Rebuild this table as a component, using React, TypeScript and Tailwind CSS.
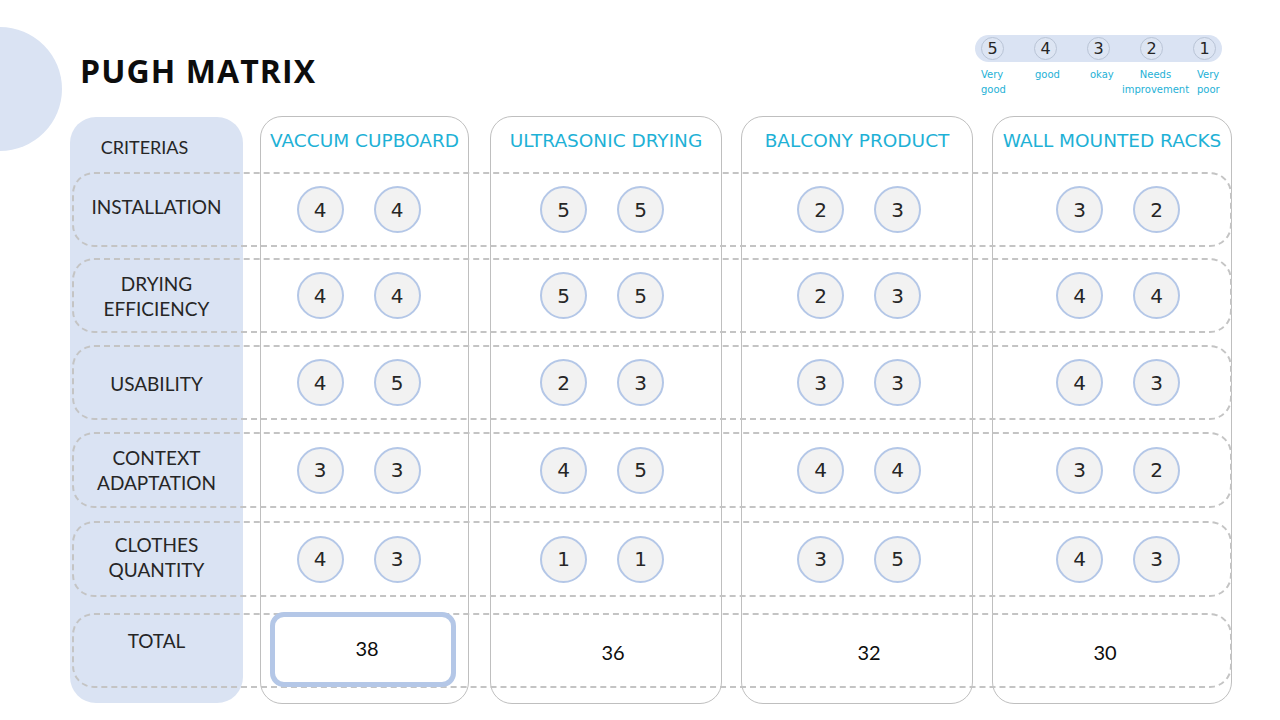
import React from "react";

const cols = [
  { name: "VACCUM CUPBOARD", scores: [[4, 4], [4, 4], [4, 5], [3, 3], [4, 3]], total: 38 },
  { name: "ULTRASONIC DRYING", scores: [[5, 5], [5, 5], [2, 3], [4, 5], [1, 1]], total: 36 },
  { name: "BALCONY PRODUCT", scores: [[2, 3], [2, 3], [3, 3], [4, 4], [3, 5]], total: 32 },
  { name: "WALL MOUNTED RACKS", scores: [[3, 2], [4, 4], [4, 3], [3, 2], [4, 3]], total: 30 },
];

const colCls = ["ml-[17px] w-[209px]", "ml-[21px] w-[232px]", "ml-[19px] w-[232px]", "ml-[19px] w-[240px]"];
const innerColCls = ["ml-[17px] w-[209px]", "ml-[21px] w-[232px]", "ml-[19px] w-[232px]", "ml-[19px] w-[238px]"];
const scoreShift = ["pr-[12px]", "pr-[8px]", "pl-[4px]", "pl-[14px]"];
const totalShift = ["pl-[8px]", "pl-[14px]", "pl-[24px]", "pr-[12px]"];

const criteria = [
  ["INSTALLATION"],
  ["DRYING", "EFFICIENCY"],
  ["USABILITY"],
  ["CONTEXT", "ADAPTATION"],
  ["CLOTHES", "QUANTITY"],
];
const rowMt = ["mt-0", "mt-[11px]", "mt-[12px]", "mt-[12px]", "mt-[13px]"];
const rowH = ["h-[75px]", "h-[75px]", "h-[75px]", "h-[76px]", "h-[76px]"];
const labelPad = ["pb-[6px]", "pt-0", "pt-[2px]", "pb-0", "pb-[4px]"];

const sans = { fontFamily: "'DejaVu Sans', Verdana, sans-serif" };
const labelFont = { fontFamily: "Lato, 'Open Sans', sans-serif" };

function Score({ v }: { v: number }) {
  return (
    <div
      className="w-[47px] h-[47px] rounded-full bg-[#f2f2f2] border-2 border-[#b4c7e7] flex items-center justify-center text-[20px] text-[#262626]"
      style={sans}
    >
      {v}
    </div>
  );
}

function Legend() {
  const items = [5, 4, 3, 2, 1];
  return (
    <div className="w-[247px]">
      <div className="h-[27px] rounded-full bg-[#dae3f3] flex items-center pl-[6px] gap-[30px]">
        {items.map((n) => (
          <div
            key={n}
            className="w-[23px] h-[23px] rounded-full border border-[#b9c4d6] bg-[#dde5f3] flex items-center justify-center text-[16px] text-[#262626]"
            style={sans}
          >
            {n}
          </div>
        ))}
      </div>
      <div className="flex items-start mt-[5px] text-[10px] leading-[15px] text-[#1eb1d6] whitespace-nowrap" style={sans}>
        <div className="ml-[6px] w-[28px] text-left">Very<br />good</div>
        <div className="ml-[26px] w-[27px] text-left">good</div>
        <div className="ml-[28px] w-[25px] text-left">okay</div>
        <div className="ml-[7px] w-[67px] text-center">Needs<br />improvement</div>
        <div className="ml-[8px] w-[25px] text-left">Very<br />poor</div>
      </div>
    </div>
  );
}

export default function App() {
  return (
    <div className="relative w-[1280px] h-[720px] bg-white overflow-hidden">
      <div className="absolute left-[-62px] top-[27px] w-[124px] h-[124px] rounded-full bg-[#dae3f3]" />

      <div className="relative h-[116px] flex justify-between items-start pl-[80px] pr-[58px] pt-[35px]">
        <h1
          className="mt-[16px] text-[32px] leading-[40px] font-bold text-[#0d0d0d] tracking-[1.1px]"
          style={{ fontFamily: "'Open Sans', sans-serif" }}
        >
          PUGH MATRIX
        </h1>
        <Legend />
      </div>

      <div className="relative ml-[70px] w-[1162px] h-[588px]">
        {/* column backgrounds */}
        <div className="absolute inset-0 flex">
          <div className="w-[173px] mt-[1px] h-[586px] rounded-[26px] bg-[#dae3f3]" />
          {colCls.map((c, i) => (
            <div key={i} className={`${c} h-[588px] rounded-[22px] border border-[#bfbfbf]`} />
          ))}
        </div>

        {/* content */}
        <div className="relative flex flex-col">
          <div className="h-[56px] flex items-start">
            <div
              className="w-[173px] pr-[24px] pt-[18px] text-center text-[18px] text-[#262626]"
              style={labelFont}
            >
              CRITERIAS
            </div>
            {cols.map((c, i) => (
              <div
                key={i}
                className={`${colCls[i]} pt-[11px] text-center text-[18.5px] text-[#1eb1d6] whitespace-nowrap`}
                style={sans}
              >
                {c.name}
              </div>
            ))}
          </div>

          {criteria.map((lines, r) => (
            <div
              key={r}
              className={`${rowMt[r]} ${rowH[r]} ml-[2px] w-[1160px] rounded-[22px] border-2 border-dashed border-[#c4c4c4] flex items-center`}
            >
              <div
                className={`w-[169px] pr-[4px] ${labelPad[r]} text-center text-[19px] leading-[25px] text-[#262626]`}
                style={labelFont}
              >
                {lines.map((l, k) => (
                  <div key={k}>{l}</div>
                ))}
              </div>
              {cols.map((c, i) => (
                <div key={i} className={`${innerColCls[i]} ${scoreShift[i]} flex justify-center gap-[30px]`}>
                  <Score v={c.scores[r][0]} />
                  <Score v={c.scores[r][1]} />
                </div>
              ))}
            </div>
          ))}

          <div className="mt-[16px] ml-[2px] w-[1160px] h-[75px] rounded-[22px] border-2 border-dashed border-[#c4c4c4] flex items-center">
            <div
              className="w-[169px] pr-[4px] pb-[18px] text-center text-[19px] text-[#262626]"
              style={labelFont}
            >
              TOTAL
            </div>
            {cols.map((c, i) => (
              <div key={i} className={`${innerColCls[i]} h-full flex items-center justify-center`}>
                {i === 0 ? (
                  <div
                    className="ml-[-3px] w-[186px] h-[75px] mt-[-3px] rounded-[14px] border-[5px] border-[#b4c7e7] bg-white flex items-center justify-center pl-[8px] pb-[2px] text-[20px] text-[#0d0d0d]"
                    style={labelFont}
                  >
                    {c.total}
                  </div>
                ) : (
                  <div className={`w-full text-center ${totalShift[i]} pt-[2px] text-[20px] text-[#0d0d0d]`} style={labelFont}>
                    {c.total}
                  </div>
                )}
              </div>
            ))}
          </div>
        </div>
      </div>
    </div>
  );
}
